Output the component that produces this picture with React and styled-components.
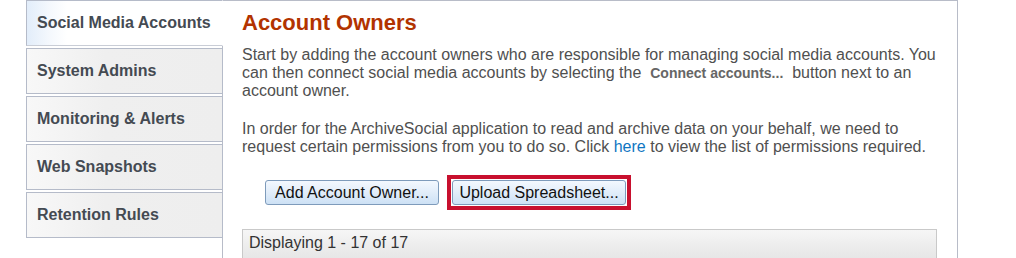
import React from "react";
import styled, { createGlobalStyle, css } from "styled-components";

const GlobalStyle = createGlobalStyle`
  html, body {
    margin: 0;
    padding: 0;
    overflow: hidden;
    background: #ffffff;
    font-family: "Liberation Sans", Arial, sans-serif;
  }
`;

const Layout = styled.div`
  display: flex;
  align-items: flex-start;
  margin-left: 26px;
  width: 932px;
`;

const TabList = styled.nav`
  position: relative;
  z-index: 1;
  flex-shrink: 0;
  width: 197px;
  display: flex;
  flex-direction: column;
  gap: 2px;
`;

const Tab = styled.div`
  box-sizing: border-box;
  height: 46px;
  display: flex;
  align-items: center;
  padding-left: 10px;
  border: 1px solid #b5bbc9;
  font-size: 16px;
  font-weight: bold;
  color: #444a52;
  cursor: pointer;
  background: linear-gradient(to right, #f8f8f8 0%, #efefef 40%, #eeeeee 100%);
  ${(p) =>
    p.$active &&
    css`
      border-right-color: #ffffff;
      border-bottom-color: #c9cdd6;
      background: linear-gradient(to right, #e2edfa 0px, #f4f8fd 22px, #ffffff 40px);
    `}
`;

const Panel = styled.section`
  box-sizing: border-box;
  flex: 1;
  margin-left: -1px;
  min-height: 320px;
  border: 1px solid #b8bcc8;
  border-bottom: none;
  padding: 9px 20px 0 19px;
`;

const Title = styled.h1`
  margin: 0;
  font-size: 22px;
  line-height: 26px;
  font-weight: bold;
  color: #b23300;
`;

const Paragraph = styled.p`
  margin: ${(p) => (p.$first ? "10px" : "20px")} 0 0;
  font-size: 16px;
  line-height: 18px;
  color: #505050;
`;

const InlineButtonLabel = styled.span`
  padding: 0 5px;
  font-size: 14px;
  font-weight: bold;
  color: #666666;
`;

const Link = styled.a`
  color: #0f76c2;
  text-decoration: none;
`;

const ButtonRow = styled.div`
  display: flex;
  align-items: center;
  gap: 8px;
  padding-left: 23px;
  margin-top: 24px;
  height: 25px;
`;

const Button = styled.button`
  box-sizing: border-box;
  width: 174px;
  height: 25px;
  padding: 0;
  border: 1px solid #7e9bbb;
  border-radius: 3px;
  background: linear-gradient(#f3f8fe 0%, #e3eefa 45%, #cde1f5 100%);
  font-family: "Liberation Sans", Arial, sans-serif;
  font-size: 16px;
  color: #111111;
  cursor: pointer;
`;

const HighlightFrame = styled.span`
  display: flex;
  padding: 1px;
  border: 4px solid #c8102e;
`;

const GridHeader = styled.div`
  box-sizing: border-box;
  margin-top: 24px;
  height: 40px;
  padding: 4px 6px;
  border: 1px solid #c9c9c9;
  background: linear-gradient(#f6f6f6 0%, #e9e9e9 60%, #e2e2e2 100%);
  font-size: 16px;
  line-height: 18px;
  color: #333333;
`;

const tabs = [
  "Social Media Accounts",
  "System Admins",
  "Monitoring & Alerts",
  "Web Snapshots",
  "Retention Rules",
];

export default function App() {
  return (
    <>
      <GlobalStyle />
      <Layout>
        <TabList>
          {tabs.map((t, i) => (
            <Tab key={t} $active={i === 0}>
              {t}
            </Tab>
          ))}
        </TabList>
        <Panel>
          <Title>Account Owners</Title>
          <Paragraph $first>
            Start by adding the account owners who are responsible for managing social media
            accounts. You can then connect social media accounts by selecting the
            <InlineButtonLabel> Connect accounts... </InlineButtonLabel>
            button next to an account owner.
          </Paragraph>
          <Paragraph>
            In order for the ArchiveSocial application to read and archive data on your behalf,
            we need to request certain permissions from you to do so. Click{" "}
            <Link href="#">here</Link> to view the list of permissions required.
          </Paragraph>
          <ButtonRow>
            <Button>Add Account Owner...</Button>
            <HighlightFrame>
              <Button>Upload Spreadsheet...</Button>
            </HighlightFrame>
          </ButtonRow>
          <GridHeader>Displaying 1 - 17 of 17</GridHeader>
        </Panel>
      </Layout>
    </>
  );
}
